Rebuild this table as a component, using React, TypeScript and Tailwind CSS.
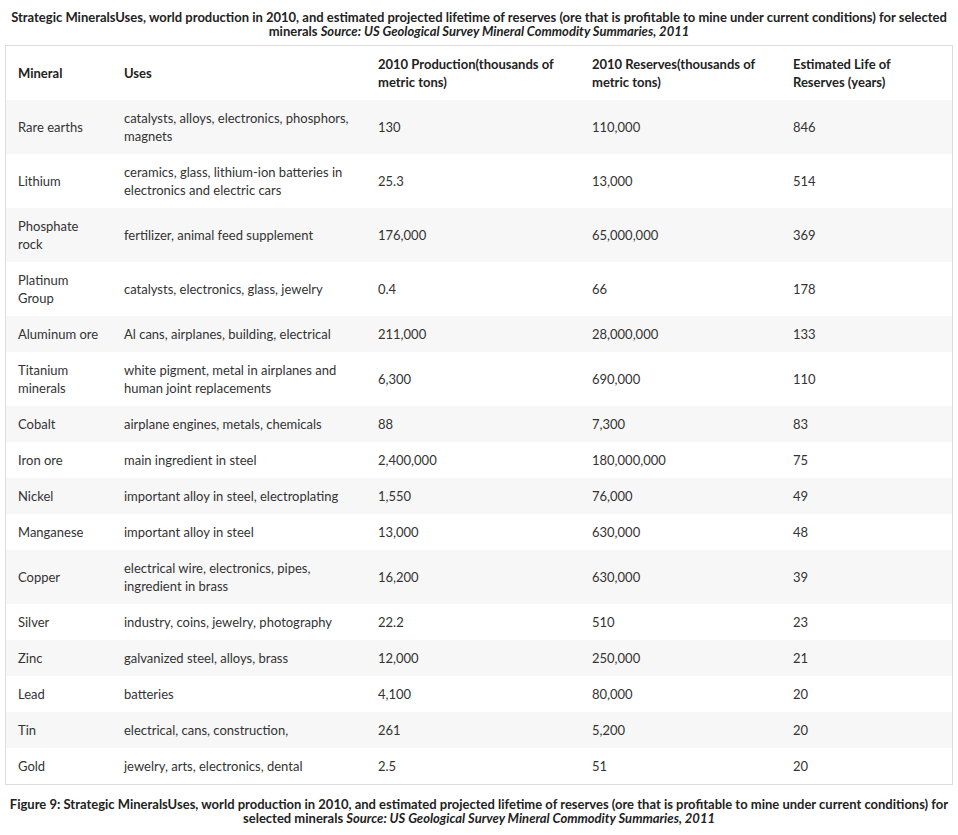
const rows: [string, string, string, string, string][] = [
  ["Rare earths", "catalysts, alloys, electronics, phosphors, magnets", "130", "110,000", "846"],
  ["Lithium", "ceramics, glass, lithium-ion batteries in electronics and electric cars", "25.3", "13,000", "514"],
  ["Phosphate rock", "fertilizer, animal feed supplement", "176,000", "65,000,000", "369"],
  ["Platinum Group", "catalysts, electronics, glass, jewelry", "0.4", "66", "178"],
  ["Aluminum ore", "Al cans, airplanes, building, electrical", "211,000", "28,000,000", "133"],
  ["Titanium minerals", "white pigment, metal in airplanes and human joint replacements", "6,300", "690,000", "110"],
  ["Cobalt", "airplane engines, metals, chemicals", "88", "7,300", "83"],
  ["Iron ore", "main ingredient in steel", "2,400,000", "180,000,000", "75"],
  ["Nickel", "important alloy in steel, electroplating", "1,550", "76,000", "49"],
  ["Manganese", "important alloy in steel", "13,000", "630,000", "48"],
  ["Copper", "electrical wire, electronics, pipes, ingredient in brass", "16,200", "630,000", "39"],
  ["Silver", "industry, coins, jewelry, photography", "22.2", "510", "23"],
  ["Zinc", "galvanized steel, alloys, brass", "12,000", "250,000", "21"],
  ["Lead", "batteries", "4,100", "80,000", "20"],
  ["Tin", "electrical, cans, construction,", "261", "5,200", "20"],
  ["Gold", "jewelry, arts, electronics, dental", "2.5", "51", "20"],
];

function Caption({ prefix }: { prefix?: string }) {
  return (
    <p className="text-center text-[13px] leading-[14px] font-bold text-[#222] px-2">
      {prefix}Strategic MineralsUses, world production in 2010, and estimated projected lifetime of reserves (ore
      that is profitable to mine under current conditions) for selected minerals{" "}
      <em>Source: US Geological Survey Mineral Commodity Summaries, 2011</em>
    </p>
  );
}

export default function App() {
  return (
    <div className="w-[958px] bg-white pt-[10px] font-['Lato','Liberation_Sans',sans-serif] text-[#333]">
      <Caption />
      <div className="mx-[5px] mt-[7px] border border-[#dcdcdc]">
        <table className="w-full table-fixed border-collapse text-[13px] leading-[18px]">
          <colgroup>
            <col className="w-[106px]" />
            <col className="w-[254px]" />
            <col className="w-[214px]" />
            <col className="w-[201px]" />
            <col />
          </colgroup>
          <thead>
            <tr className="h-[54px] text-left font-bold text-[#222]">
              <th className="px-3 align-middle">Mineral</th>
              <th className="px-3 align-middle">Uses</th>
              <th className="px-3 pr-6 align-middle">2010 Production(thousands of metric tons)</th>
              <th className="px-3 pr-6 align-middle">2010 Reserves(thousands of metric tons)</th>
              <th className="px-3 pr-10 align-middle">Estimated Life of Reserves (years)</th>
            </tr>
          </thead>
          <tbody>
            {rows.map((r, i) => (
              <tr key={r[0]} className={i % 2 === 0 ? "bg-[#f7f7f7]" : "bg-white"}>
                {r.map((c, j) => (
                  <td key={j} className="px-3 py-[9px] align-middle">
                    {c}
                  </td>
                ))}
              </tr>
            ))}
          </tbody>
        </table>
      </div>
      <div className="mt-[12px] pb-3">
        <Caption prefix="Figure 9: " />
      </div>
    </div>
  );
}
